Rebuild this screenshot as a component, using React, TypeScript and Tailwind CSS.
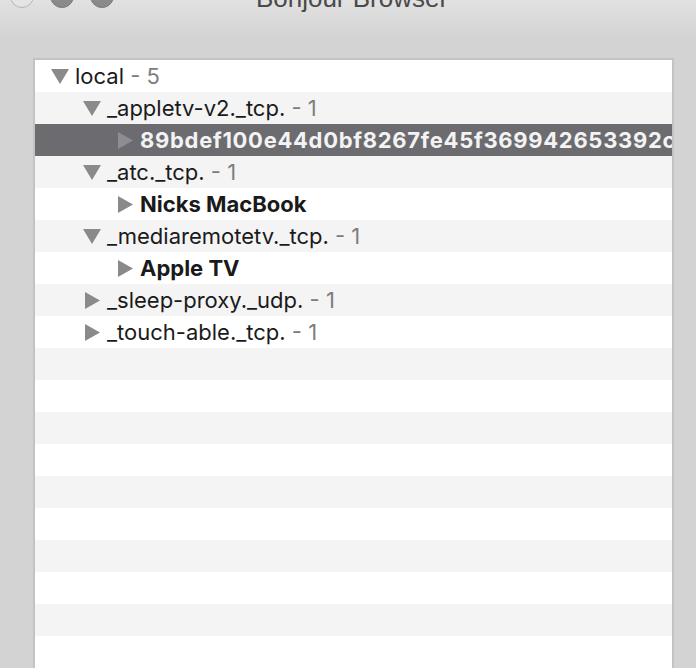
import React from "react";

type Row = {
  level: number;
  tri?: "down" | "right";
  name?: string;
  count?: string;
  bold?: boolean;
  selected?: boolean;
};

const rows: Row[] = [
  { level: 0, tri: "down", name: "local", count: "5" },
  { level: 1, tri: "down", name: "_appletv-v2._tcp.", count: "1" },
  { level: 2, tri: "right", name: "89bdef100e44d0bf8267fe45f369942653392cd1a7", bold: true, selected: true },
  { level: 1, tri: "down", name: "_atc._tcp.", count: "1" },
  { level: 2, tri: "right", name: "Nicks MacBook", bold: true },
  { level: 1, tri: "down", name: "_mediaremotetv._tcp.", count: "1" },
  { level: 2, tri: "right", name: "Apple TV", bold: true },
  { level: 1, tri: "right", name: "_sleep-proxy._udp.", count: "1" },
  { level: 1, tri: "right", name: "_touch-able._tcp.", count: "1" },
];

while (rows.length < 19) rows.push({ level: 0 });

function Tri({ dir, selected }: { dir: "down" | "right"; selected?: boolean }) {
  const fill = selected ? "#8e8d92" : "#8a8a8a";
  if (dir === "down") {
    return (
      <svg width="18" height="15" viewBox="0 0 18 15">
        <polygon points="0,0 18,0 9,15" fill={fill} />
      </svg>
    );
  }
  return (
    <svg width="15" height="17" viewBox="0 0 15 17" className="ml-[2px]">
      <polygon points="0,0 15,8.5 0,17" fill={fill} />
    </svg>
  );
}

const padClass = ["pl-[16px]", "pl-[48px]", "pl-[81px]"];

export default function App() {
  return (
    <div
      className="w-[696px] h-[668px] overflow-hidden flex flex-col bg-[#d3d3d3]"
      style={{ fontFamily: "Inter, 'Liberation Sans', sans-serif" }}
    >
      <div className="h-[58px] shrink-0 grid grid-cols-[1fr_auto_1fr] items-start bg-[linear-gradient(to_bottom,#e1e1e1,#d3d3d3_40px)]">
        <div className="flex gap-[16px] ml-[10px] -mt-[16px]">
          <div className="w-[24px] h-[24px] rounded-full bg-[#e4e4e4] border border-[#b3b3b3]" />
          <div className="w-[24px] h-[24px] rounded-full bg-[#8a8a8c] border border-[#7a7a7c]" />
          <div className="w-[24px] h-[24px] rounded-full bg-[#8a8a8c] border border-[#7a7a7c]" />
        </div>
        <div
          className="-mt-[15px] pl-[8px] text-[26px] leading-[26px] text-[#4a4a4a] whitespace-nowrap"
          style={{ fontFamily: "'Liberation Sans', Arial, sans-serif" }}
        >
          Bonjour Browser
        </div>
        <div />
      </div>
      <div className="ml-[33px] w-[641px] flex-1 border-2 border-b-0 border-[#c3c3c3] bg-white overflow-hidden">
        {rows.map((r, i) => (
          <div
            key={i}
            className={`h-[32px] flex items-center whitespace-nowrap ${padClass[r.level]} ${
              r.selected ? "bg-[#6c6b70]" : i % 2 === 1 ? "bg-[#f4f4f4]" : "bg-white"
            }`}
          >
            {r.tri && (
              <div className="w-[24px] shrink-0 flex items-center">
                <Tri dir={r.tri} selected={r.selected} />
              </div>
            )}
            {r.name && (
              <span
                className={`text-[22px] leading-[32px] ${r.bold ? "font-bold" : "font-normal"} ${
                  r.selected ? "text-[#f3f3f3] tracking-[0.7px]" : "text-[#1a1a1a]"
                }`}
              >
                {r.name}
                {r.count && <span className="text-[#7d7d7d]"> - {r.count}</span>}
              </span>
            )}
          </div>
        ))}
      </div>
    </div>
  );
}
